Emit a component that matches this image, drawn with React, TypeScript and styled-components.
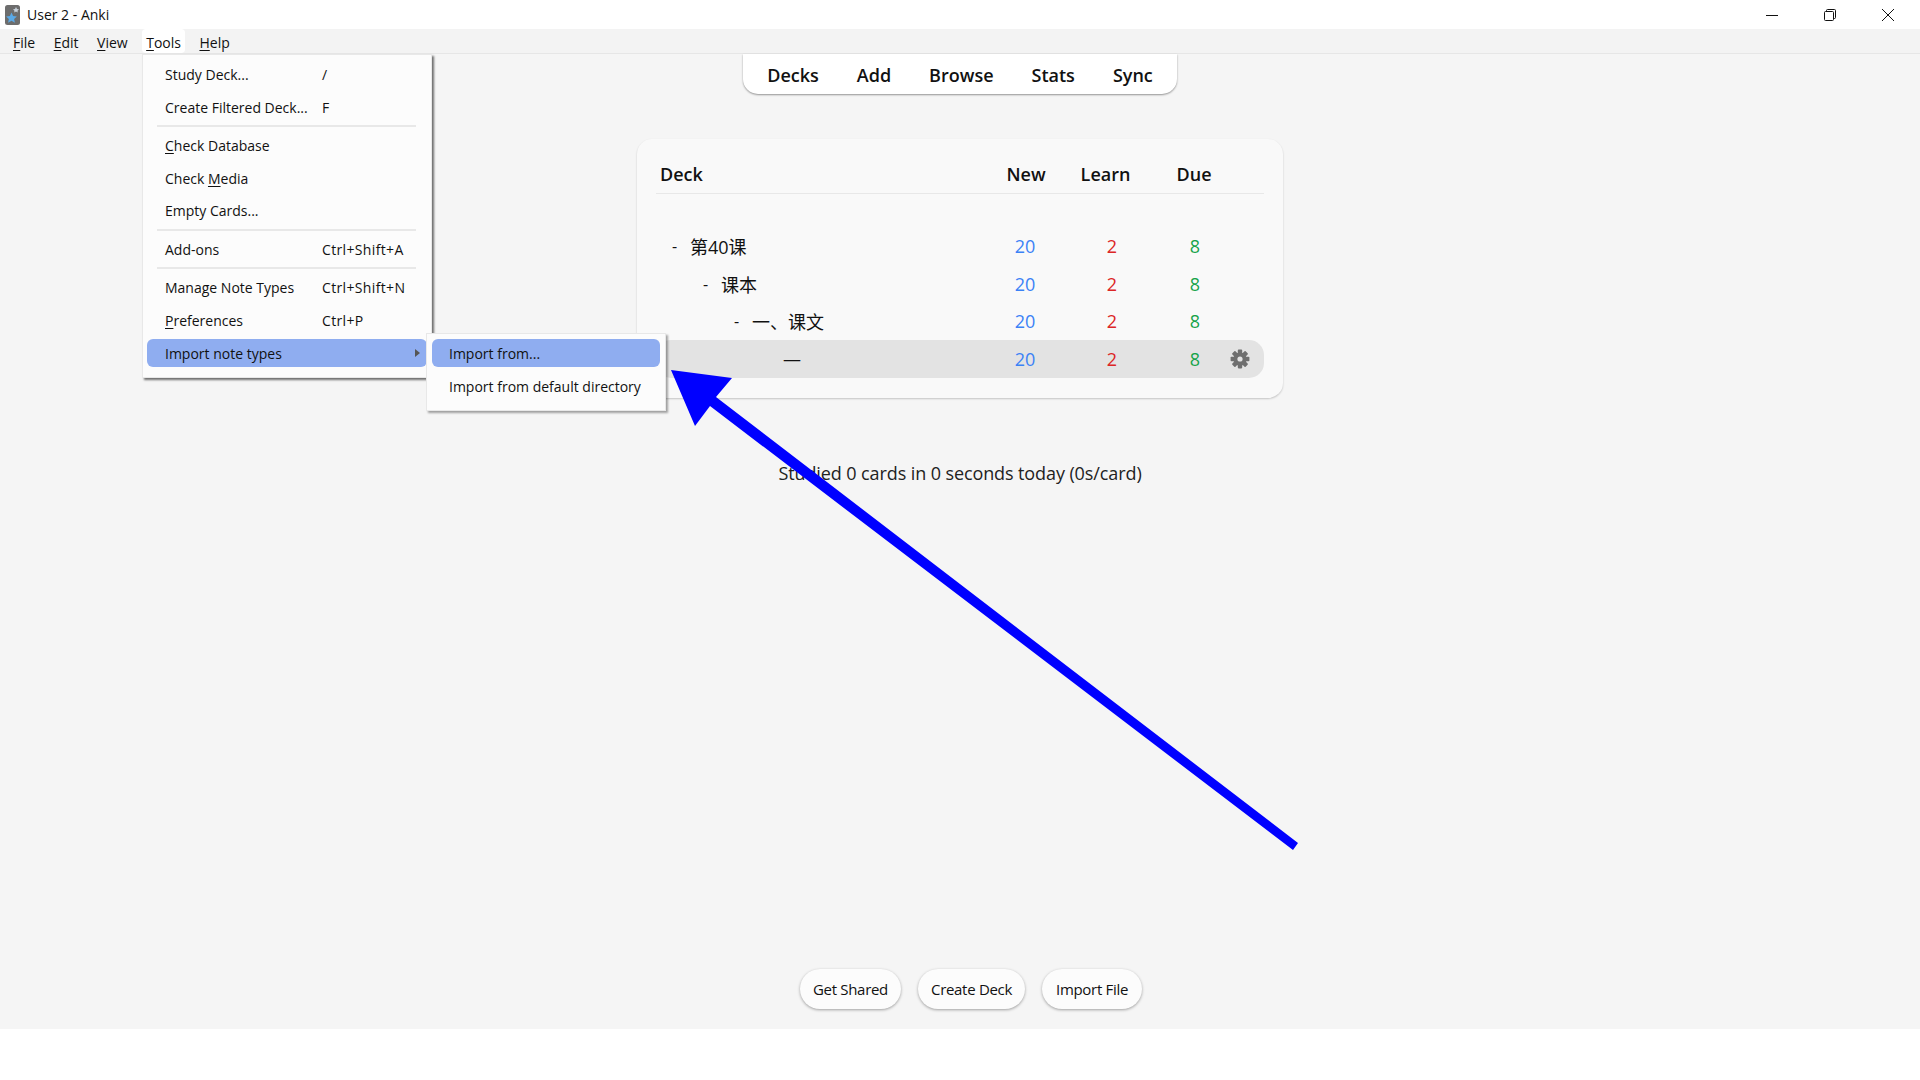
import React from "react";
import styled, { createGlobalStyle } from "styled-components";

const Global = createGlobalStyle`
  html, body { margin: 0; padding: 0; background: #fff; }
  body { font-family: "Open Sans", "Noto Sans CJK SC", sans-serif; color: #111; }
  #root { width: 1920px; height: 1080px; overflow: hidden; }
`;

const Window = styled.div`
  position: relative;
  width: 1920px;
  height: 1080px;
  display: flex;
  flex-direction: column;
  background: #fff;
  overflow: hidden;
`;

const TitleBar = styled.div`
  height: 29px;
  display: flex;
  align-items: center;
  background: #fff;
  padding-left: 5px;
  flex: none;
`;

const TitleText = styled.span`
  font-size: 14px;
  margin-left: 7px;
  color: #111;
`;

const WindowControls = styled.div`
  margin-left: auto;
  display: flex;
  height: 100%;
  align-items: center;
  margin-right: 26px;
  gap: 46px;
`;

const MenuBar = styled.div`
  height: 25px;
  box-sizing: border-box;
  flex: none;
  display: flex;
  align-items: stretch;
  gap: 10.5px;
  background: #f3f3f3;
  border-bottom: 1px solid #e6e6e6;
  padding-left: 9px;
`;

const MenuBarItem = styled.div<{ $open?: boolean }>`
  font-size: 14px;
  line-height: 27px;
  padding: 0 4px;
  border-radius: 4px;
  background: ${(p) => (p.$open ? "#fff" : "transparent")};
  color: #111;
`;

const Key = styled.span`
  text-decoration: underline;
  text-underline-offset: 2px;
  text-decoration-thickness: 1px;
`;

const Main = styled.main`
  height: 975px;
  flex: none;
  background: #f5f5f5;
  display: flex;
  flex-direction: column;
  align-items: center;
`;

const TopNav = styled.nav`
  display: flex;
  height: 40px;
  box-sizing: border-box;
  padding: 2px 24px 0;
  align-items: center;
  gap: 38px;
  background: #fff;
  border-radius: 0 0 15px 15px;
  box-shadow: 0 1px 2px rgba(0, 0, 0, 0.4);
`;

const NavLink = styled.span`
  font-size: 18px;
  font-weight: 600;
  color: #111;
`;

const Card = styled.section`
  margin-top: 45px;
  width: 646px;
  height: 259px;
  box-sizing: border-box;
  padding: 18px 19px 0;
  background: #f9f9f9;
  border-radius: 15px;
  box-shadow: 0 1px 2px rgba(0, 0, 0, 0.2);
`;

const HeaderRow = styled.div`
  display: grid;
  grid-template-columns: 1fr 72px 87px 90px 25px;
  height: 37px;
  box-sizing: border-box;
  padding-bottom: 2px;
  align-items: center;
  border-bottom: 1px solid #e8e8e8;
  margin-bottom: 33.5px;
  font-size: 18px;
  font-weight: 600;
`;

const DeckHead = styled.span`
  padding-left: 4px;
`;

const NumHead = styled.span`
  text-align: center;
`;

const DeckRow = styled.div<{ $active?: boolean }>`
  display: grid;
  grid-template-columns: 1fr 70px 104px 62px 38px;
  height: 37.5px;
  align-items: center;
  border-radius: 15px;
  background: ${(p) => (p.$active ? "#e3e3e3" : "transparent")};
  font-size: 18px;
`;

const DeckName = styled.div<{ $level: number }>`
  display: flex;
  align-items: center;
  padding-left: ${(p) => 16 + p.$level * 31}px;
  color: #111;
`;

const Collapse = styled.span`
  font-size: 16px;
  width: 18px;
  flex: none;
`;

const Count = styled.span<{ $color: string }>`
  color: ${(p) => p.$color};
  text-align: center;
`;

const GearCell = styled.div`
  display: flex;
  align-items: center;
  padding-left: 4px;
`;

const Stats = styled.div`
  margin-top: 63px;
  font-size: 18px;
  letter-spacing: -0.1px;
  color: #222;
  line-height: 24px;
`;

const BottomBar = styled.div`
  margin-top: auto;
  margin-bottom: 20px;
  margin-left: 22px;
  display: flex;
  gap: 17px;
`;

const PillButton = styled.button`
  height: 40px;
  min-width: 100px;
  padding: 0 13px;
  border: none;
  border-radius: 20px;
  background: #fcfcfc;
  box-shadow: 0 1px 3px rgba(0, 0, 0, 0.35);
  font-family: inherit;
  font-size: 15px;
  letter-spacing: -0.3px;
  color: #111;
`;

const PopMenu = styled.div<{
  $left: number;
  $top: number;
  $width: number;
  $height: number;
  $pad: number;
  $shade: number;
}>`
  position: absolute;
  left: ${(p) => p.$left}px;
  top: ${(p) => p.$top}px;
  width: ${(p) => p.$width}px;
  height: ${(p) => p.$height}px;
  box-sizing: border-box;
  background: #fcfcfc;
  border: 1px solid #e8e8e8;
  box-shadow: 2px 2px 2px rgba(0, 0, 0, ${(p) => p.$shade});
  padding: ${(p) => p.$pad}px;
  z-index: 5;
`;

const MenuRow = styled.div<{ $active?: boolean; $h?: number; $indent?: number; $gapTop?: number }>`
  display: flex;
  align-items: center;
  position: relative;
  box-sizing: border-box;
  height: ${(p) => p.$h ?? 32.5}px;
  margin-top: ${(p) => p.$gapTop ?? 0}px;
  padding-left: ${(p) => p.$indent ?? 18}px;
  padding-bottom: ${(p) => (p.$active ? 0 : 1)}px;
  border-radius: 6px;
  background: ${(p) => (p.$active ? "#8fadf0" : "transparent")};
  font-size: 14px;
  color: #111;
  white-space: nowrap;
`;

const RowLabel = styled.span`
  width: 157px;
  flex: none;
`;

const Shortcut = styled.span`
  letter-spacing: 0.35px;
`;

const Divider = styled.div`
  height: 2px;
  margin: 1px 11px 3px 10px;
  background: #e8e8e8;
`;

const SubArrow = styled.span`
  position: absolute;
  right: 7px;
  top: 9.5px;
  width: 0;
  height: 0;
  border-left: 5px solid #555;
  border-top: 4.5px solid transparent;
  border-bottom: 4.5px solid transparent;
`;

const ArrowOverlay = styled.svg`
  position: absolute;
  left: 0;
  top: 0;
  z-index: 10;
  pointer-events: none;
`;

const Gear = () => (
  <svg width="20" height="20" viewBox="0 0 20 20">
    {[0, 45, 90, 135].map((a) => (
      <rect key={a} x="7.8" y="0.6" width="4.4" height="18.8" rx="0.8" fill="#6f6f6f" transform={`rotate(${a} 10 10)`} />
    ))}
    <circle cx="10" cy="10" r="5" fill="none" stroke="#6f6f6f" strokeWidth="3.2" />
    <circle cx="10" cy="10" r="2.6" fill="#e3e3e3" />
  </svg>
);

const AnkiLogo = () => (
  <svg width="15" height="20" viewBox="0 0 15 20">
    <rect x="0" y="0" width="15" height="20" rx="2.5" fill="#6d6d6d" />
    <polygon points="11,2 12,4 14,4.3 12.5,5.7 12.8,7.6 11,6.6 9.2,7.6 9.5,5.7 8,4.3 10,4" fill="#c9d3dc" />
    <polygon points="6.5,7.5 8.1,11 11.9,11.4 9.1,14 9.9,17.7 6.5,15.8 3.1,17.7 3.9,14 1.1,11.4 4.9,11" fill="#5aa9e6" />
  </svg>
);

const MinimizeIcon = () => (
  <svg width="12" height="12" viewBox="0 0 12 12"><path d="M0 6.5h12" stroke="#111" fill="none" /></svg>
);
const RestoreIcon = () => (
  <svg width="12" height="12" viewBox="0 0 12 12" fill="none" stroke="#111">
    <rect x="0.5" y="2.5" width="9" height="9" rx="1" />
    <path d="M2.5 2.5V1.5a1 1 0 0 1 1-1h7a1 1 0 0 1 1 1v7a1 1 0 0 1-1 1h-1" />
  </svg>
);
const CloseIcon = () => (
  <svg width="12" height="12" viewBox="0 0 12 12" fill="none" stroke="#111"><path d="M0 0l12 12M12 0L0 12" /></svg>
);

const decks = [
  { level: 0, name: "第40课", toggle: "-" },
  { level: 1, name: "课本", toggle: "-" },
  { level: 2, name: "一、课文", toggle: "-" },
  { level: 3, name: "—", toggle: "" },
];

const Counts = () => (
  <>
    <Count $color="#3b82f6">20</Count>
    <Count $color="#dc2626">2</Count>
    <Count $color="#16a34a">8</Count>
  </>
);

export default function App() {
  return (
    <Window>
      <Global />
      <TitleBar>
        <AnkiLogo />
        <TitleText>User 2 - Anki</TitleText>
        <WindowControls>
          <MinimizeIcon />
          <RestoreIcon />
          <CloseIcon />
        </WindowControls>
      </TitleBar>
      <MenuBar>
        <MenuBarItem><Key>F</Key>ile</MenuBarItem>
        <MenuBarItem><Key>E</Key>dit</MenuBarItem>
        <MenuBarItem><Key>V</Key>iew</MenuBarItem>
        <MenuBarItem $open><Key>T</Key>ools</MenuBarItem>
        <MenuBarItem><Key>H</Key>elp</MenuBarItem>
      </MenuBar>
      <Main>
        <TopNav>
          <NavLink>Decks</NavLink>
          <NavLink>Add</NavLink>
          <NavLink>Browse</NavLink>
          <NavLink>Stats</NavLink>
          <NavLink>Sync</NavLink>
        </TopNav>
        <Card>
          <HeaderRow>
            <DeckHead>Deck</DeckHead>
            <NumHead>New</NumHead>
            <NumHead>Learn</NumHead>
            <NumHead>Due</NumHead>
          </HeaderRow>
          {decks.map((d) => (
            <DeckRow key={d.name} $active={d.level === 3}>
              <DeckName $level={d.level}>
                <Collapse>{d.toggle}</Collapse>
                {d.name}
              </DeckName>
              <Counts />
              {d.level === 3 ? <GearCell><Gear /></GearCell> : <span />}
            </DeckRow>
          ))}
        </Card>
        <Stats>Studied 0 cards in 0 seconds today (0s/card)</Stats>
        <BottomBar>
          <PillButton>Get Shared</PillButton>
          <PillButton>Create Deck</PillButton>
          <PillButton>Import File</PillButton>
        </BottomBar>
      </Main>

      <PopMenu $left={142} $top={54} $width={290} $height={324} $pad={4} $shade={0.55}>
        <MenuRow><RowLabel>Study Deck...</RowLabel><Shortcut>/</Shortcut></MenuRow>
        <MenuRow><RowLabel>Create Filtered Deck...</RowLabel><Shortcut>F</Shortcut></MenuRow>
        <Divider />
        <MenuRow><RowLabel><Key>C</Key>heck Database</RowLabel></MenuRow>
        <MenuRow><RowLabel>Check <Key>M</Key>edia</RowLabel></MenuRow>
        <MenuRow><RowLabel>Empty Cards...</RowLabel></MenuRow>
        <Divider />
        <MenuRow><RowLabel>Add-ons</RowLabel><Shortcut>Ctrl+Shift+A</Shortcut></MenuRow>
        <Divider />
        <MenuRow><RowLabel>Manage Note Types</RowLabel><Shortcut>Ctrl+Shift+N</Shortcut></MenuRow>
        <MenuRow><RowLabel><Key>P</Key>references</RowLabel><Shortcut>Ctrl+P</Shortcut></MenuRow>
        <MenuRow $active $h={28} $gapTop={2}><RowLabel>Import note types</RowLabel><SubArrow /></MenuRow>
      </PopMenu>
      <PopMenu $left={426} $top={333} $width={240} $height={78} $pad={5} $shade={0.35}>
        <MenuRow $active $h={28} $indent={17}>Import from...</MenuRow>
        <MenuRow $h={39} $indent={17}>Import from default directory</MenuRow>
      </PopMenu>

      <ArrowOverlay width="1920" height="1080" viewBox="0 0 1920 1080">
        <polygon points="671,370 732,378 716,397 1298,843 1293,850 710,406 695,426" fill="#0000ff" />
      </ArrowOverlay>
    </Window>
  );
}
